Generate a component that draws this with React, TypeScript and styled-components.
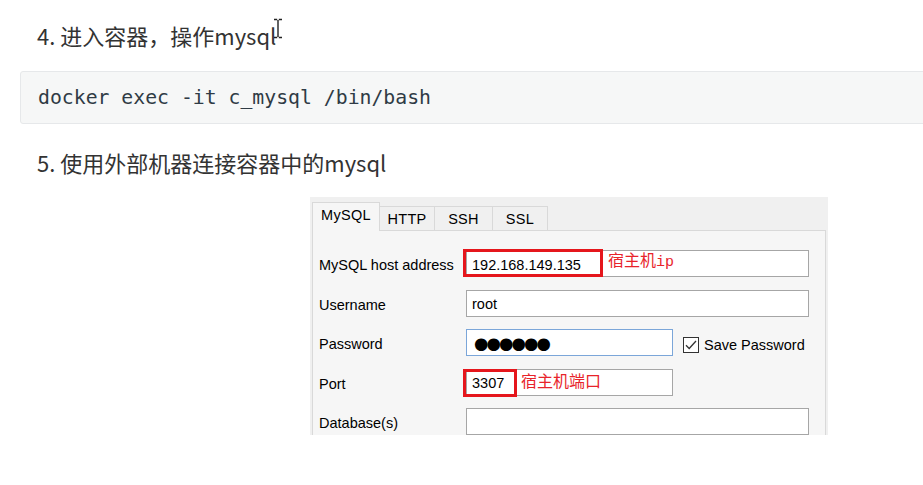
import React from 'react';
import styled, { createGlobalStyle } from 'styled-components';

const GlobalStyle = createGlobalStyle`
  html, body {
    margin: 0;
    padding: 0;
    background: #ffffff;
    overflow: hidden;
  }
`;

const Page = styled.div`
  width: 923px;
  height: 485px;
  padding-top: 20px;
  box-sizing: border-box;
  overflow: hidden;
  font-family: "Noto Sans CJK SC", "Noto Sans", sans-serif;
  color: #333333;
`;

const Heading = styled.div<{ $gap: number }>`
  position: relative;
  margin-left: 37px;
  font-size: 22px;
  line-height: 30px;
  height: 30px;
  margin-bottom: ${p => p.$gap}px;
`;

const Cursor = styled.svg`
  position: absolute;
  left: 236px;
  top: -2px;
`;

const CodeBlock = styled.div`
  margin-left: 20px;
  width: 940px;
  height: 53px;
  box-sizing: border-box;
  background: #f6f7f7;
  border: 1px solid #e6e8ea;
  border-radius: 3px;
  display: flex;
  align-items: center;
  padding-left: 17px;
  margin-bottom: 23px;
  font-family: "DejaVu Sans Mono", "Liberation Mono", monospace;
  font-size: 19.8px;
  color: #2f3b45;
`;

const Dialog = styled.div`
  margin-left: 310px;
  width: 518px;
  height: 238px;
  margin-top: 20px;
  box-sizing: border-box;
  background: #f0f0f0;
  padding: 5px 2px 0 2px;
  display: flex;
  flex-direction: column;
  overflow: hidden;
  font-family: "Liberation Sans", Arial, sans-serif;
  font-size: 14.5px;
  color: #000;
`;

const TabStrip = styled.div`
  display: flex;
  align-items: flex-end;
  height: 29px;
  position: relative;
  z-index: 1;
`;

const Tab = styled.div<{ $w: number; $active?: boolean }>`
  width: ${p => p.$w}px;
  height: ${p => (p.$active ? 29 : 25)}px;
  box-sizing: border-box;
  border: 1px solid #d9d9d9;
  border-bottom: ${p => (p.$active ? 'none' : '1px solid #d9d9d9')};
  border-left: ${p => (p.$active ? '1px solid #d9d9d9' : 'none')};
  background: ${p => (p.$active ? '#f6f6f6' : '#f0f0f0')};
  display: flex;
  align-items: center;
  justify-content: center;
  padding-bottom: ${p => (p.$active ? 4 : 0)}px;
  letter-spacing: 0.3px;
`;

const Panel = styled.div`
  flex: 1;
  margin-top: -1px;
  border: 1px solid #d9d9d9;
  border-bottom: none;
  background: #f6f6f6;
  padding: 19px 0 0 6px;
  display: grid;
  grid-template-columns: 147px 1fr;
  grid-auto-rows: 27px;
  row-gap: 12.5px;
  align-items: center;
`;

const Label = styled.div`
  line-height: 27px;
  padding-top: 4px;
`;

const FieldRow = styled.div`
  display: flex;
  align-items: center;
  height: 27px;
`;

const Input = styled.div<{ $w: number; $focus?: boolean }>`
  position: relative;
  width: ${p => p.$w}px;
  height: 27px;
  box-sizing: border-box;
  background: #fff;
  border: 1px solid ${p => (p.$focus ? '#7ba6d9' : '#a6a6a6')};
  padding: 2px 0 0 5px;
  display: flex;
  align-items: center;
`;

const Dots = styled.span`
  font-family: "DejaVu Sans", sans-serif;
  font-size: 16.5px;
  letter-spacing: -1.9px;
  padding-left: 2px;
`;

const RedBox = styled.div<{ $w: number; $h: number; $top: number }>`
  position: absolute;
  left: -4px;
  top: ${p => p.$top}px;
  width: ${p => p.$w}px;
  height: ${p => p.$h}px;
  box-sizing: border-box;
  border: 3px solid #e5161c;
`;

const Note = styled.span<{ $left: number; $top: number }>`
  position: absolute;
  left: ${p => p.$left}px;
  top: ${p => p.$top}px;
  font-family: "Noto Sans CJK SC", sans-serif;
  font-size: 16px;
  line-height: 18px;
  color: #e8232a;
  white-space: nowrap;
`;

const NoteMono = styled.span`
  font-family: "Liberation Mono", monospace;
  font-size: 15px;
`;

const Check = styled.label`
  display: flex;
  align-items: center;
  gap: 5px;
  margin-left: 10px;
  padding-top: 4px;
`;

const Box = styled.span`
  width: 16px;
  height: 16px;
  box-sizing: border-box;
  border: 1px solid #333;
  background: #fff;
  display: flex;
  align-items: center;
  justify-content: center;
`;

const App: React.FC = () => {
  return (
    <Page>
      <GlobalStyle />
      <Heading $gap={21}>
        4. 进入容器，操作mysql
        <Cursor width="10" height="21" viewBox="0 0 10 21">
          <path d="M1 1.5h3.2M5.8 1.5H9M5 2v17M1 19.5h3.2M5.8 19.5H9" stroke="#222" strokeWidth="1.4" fill="none" />
        </Cursor>
      </Heading>
      <CodeBlock>docker exec -it c_mysql /bin/bash</CodeBlock>
      <Heading $gap={0}>5. 使用外部机器连接容器中的mysql</Heading>
      <Dialog>
        <TabStrip>
          <Tab $w={68} $active>MySQL</Tab>
          <Tab $w={55}>HTTP</Tab>
          <Tab $w={58}>SSH</Tab>
          <Tab $w={55}>SSL</Tab>
        </TabStrip>
        <Panel>
          <Label>MySQL host address</Label>
          <FieldRow>
            <Input $w={343}>
              192.168.149.135
              <RedBox $w={140} $h={28} $top={-2} />
              <Note $left={141} $top={-1}>
                宿主机<NoteMono>ip</NoteMono>
              </Note>
            </Input>
          </FieldRow>

          <Label>Username</Label>
          <FieldRow>
            <Input $w={343}>root</Input>
          </FieldRow>

          <Label>Password</Label>
          <FieldRow>
            <Input $w={207} $focus>
              <Dots>●●●●●●</Dots>
            </Input>
            <Check>
              <Box>
                <svg width="14" height="14" viewBox="0 0 14 14">
                  <path d="M2 7.2l3.2 3.3L12 3" stroke="#333" strokeWidth="1.3" fill="none" />
                </svg>
              </Box>
              Save Password
            </Check>
          </FieldRow>

          <Label>Port</Label>
          <FieldRow>
            <Input $w={207}>
              3307
              <RedBox $w={54} $h={28} $top={-1} />
              <Note $left={54} $top={1}>宿主机端口</Note>
            </Input>
          </FieldRow>

          <Label>Database(s)</Label>
          <FieldRow>
            <Input $w={343} />
          </FieldRow>
        </Panel>
      </Dialog>
    </Page>
  );
};

export default App;
